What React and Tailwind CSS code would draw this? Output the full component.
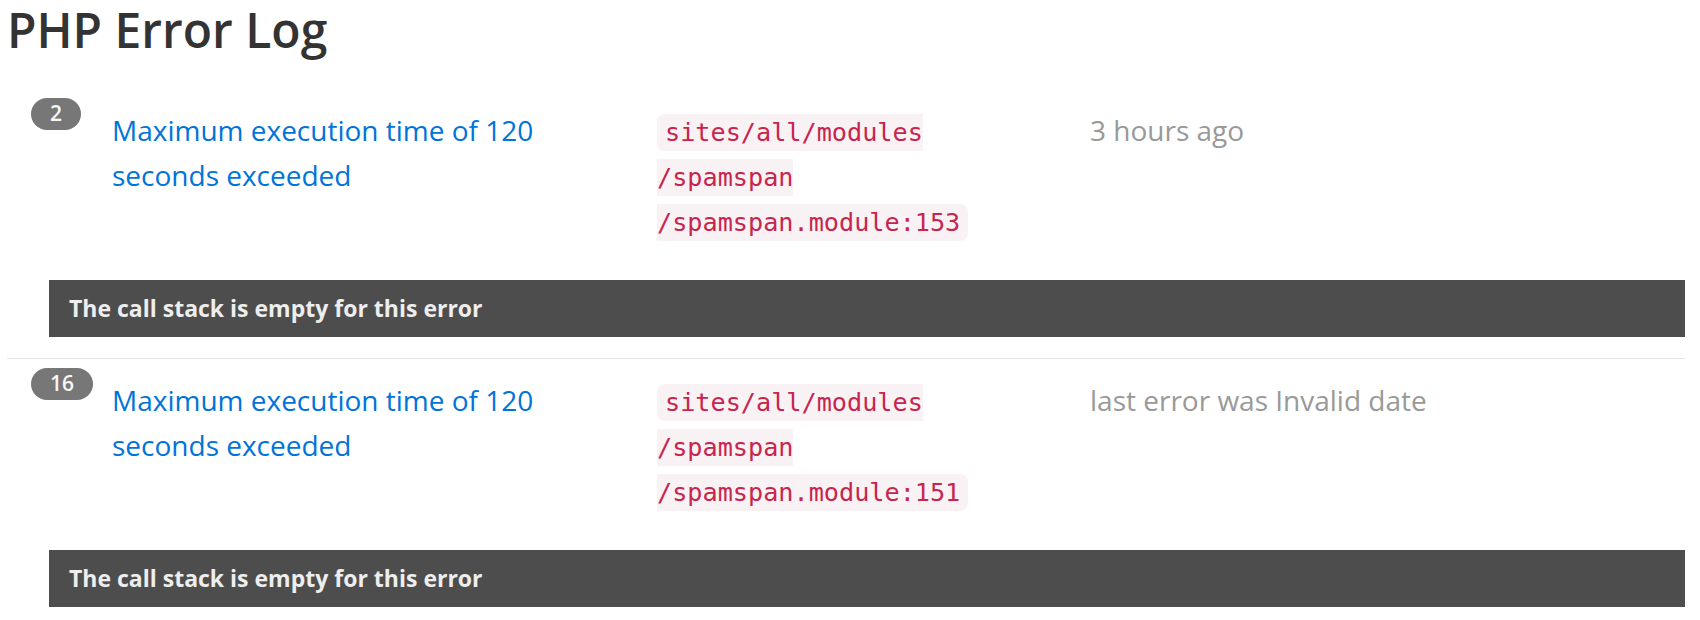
const ERRORS = [
  {
    id: 1,
    count: 2,
    message: "Maximum execution time of 120 seconds exceeded",
    file: ["sites/all/modules", "/spamspan", "/spamspan.module:153"],
    when: "3 hours ago",
  },
  {
    id: 2,
    count: 16,
    message: "Maximum execution time of 120 seconds exceeded",
    file: ["sites/all/modules", "/spamspan", "/spamspan.module:151"],
    when: "last error was Invalid date",
  },
];

function ErrorRow({ error }) {
  return (
    <div className="border-b border-[#e5e5e5] pt-[9px] pb-[21px]">
      <div className="flex items-start">
        <div className="w-[105px] shrink-0 pl-[24px]">
          <span className="inline-flex h-[32px] items-center rounded-full bg-[#777777] px-[19px] text-[21px] font-semibold text-[#f7f7f7]">
            {error.count}
          </span>
        </div>
        <a
          href="#"
          className="mt-[10px] w-[545px] shrink-0 pr-[38px] text-[28px] leading-[45px] text-[#0074d9]"
        >
          {error.message}
        </a>
        <div className="mt-[10px] w-[433px] shrink-0 text-[28px] leading-[45px]">
          <code className="rounded-[8px] bg-[#f9f2f4] px-[8px] py-[4px] font-['DejaVu_Sans_Mono',monospace] text-[25.2px] leading-[40px] text-[#c7254e]">
            {error.file.map((part, i) => (
              <span key={i}>
                {i > 0 && <br />}
                {part}
              </span>
            ))}
          </code>
        </div>
        <div className="mt-[10px] flex-1 text-[28px] leading-[45px] text-[#999999]">{error.when}</div>
      </div>
      <div className="mt-[37px] ml-[42px] flex h-[57px] items-center bg-[#4d4d4d] px-[20px] text-[23px] font-bold text-[#eeeeee]">
        The call stack is empty for this error
      </div>
    </div>
  );
}

export default function App() {
  return (
    <div className="min-h-[620px] bg-white pl-[7px] pr-[15px] font-['Open_Sans',sans-serif]">
      <h1 className="pb-[29px] text-[48px] leading-[60px] font-semibold text-[#333333]">PHP Error Log</h1>
      {ERRORS.map((error) => (
        <ErrorRow key={error.id} error={error} />
      ))}
    </div>
  );
}
